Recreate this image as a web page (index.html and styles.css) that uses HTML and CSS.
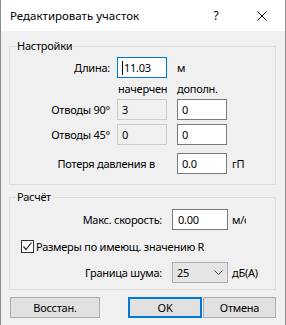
FILE: index.html
```html
<!DOCTYPE html>
<html lang="ru">
<head>
<meta charset="utf-8">
<link rel="stylesheet" href="styles.css">
</head>
<body>
<div class="window">
  <header class="titlebar">
    <span class="title">Редактировать участок</span>
    <span class="tbtn help">?</span>
    <span class="tbtn close"><svg width="10" height="10" viewBox="0 0 10 10"><path d="M0.5 0.5 L9.5 9.5 M9.5 0.5 L0.5 9.5" stroke="#000" stroke-width="1" fill="none"/></svg></span>
  </header>
  <main class="content">
    <fieldset class="group g1">
      <legend>Настройки</legend>
      <div class="grid1">
        <span class="lbl">Длина:</span>
        <div class="field focus"><span class="caret"></span>11.03</div>
        <span class="unit u-m">м</span>

        <span class="hdr c2">начерчен</span>
        <span class="hdr c3">дополн.</span>

        <span class="lbl">Отводы 90°</span>
        <div class="field ro">3</div>
        <div class="field c3">0</div>

        <span class="lbl">Отводы 45°</span>
        <div class="field ro">0</div>
        <div class="field c3">0</div>

        <span class="lbl wide">Потеря давления в</span>
        <div class="field c3">0.0</div>
        <span class="unit">гП</span>
      </div>
    </fieldset>

    <fieldset class="group g2">
      <legend>Расчёт</legend>
      <div class="grid2">
        <span class="lbl">Макс. скорость:</span>
        <div class="field">0.00</div>
        <span class="unit clip">м/с</span>

        <label class="check">
          <span class="box"><svg width="11" height="11" viewBox="0 0 11 11"><path d="M1.5 5.5 L4 8.5 L9.5 1.5" stroke="#222" stroke-width="1.2" fill="none"/></svg></span>
          <span>Размеры по имеющ. значению R</span>
        </label>

        <span class="lbl">Граница шума:</span>
        <div class="combo"><span>25</span><svg width="9" height="6" viewBox="0 0 9 6"><path d="M0.5 0.5 L4.5 4.5 L8.5 0.5" stroke="#444" stroke-width="1" fill="none"/></svg></div>
        <span class="unit">дБ(А)</span>
      </div>
    </fieldset>

    <div class="buttons">
      <button class="btn reset">Восстан.</button>
      <button class="btn ok">OK</button>
      <button class="btn">Отмена</button>
    </div>
  </main>
</div>
</body>
</html>
```

FILE: styles.css
```css
* { box-sizing: border-box; }
html, body { margin: 0; padding: 0; }
body {
  font-family: "Noto Sans", "Segoe UI", sans-serif;
  font-size: 11px;
  letter-spacing: -0.25px;
  color: #000;
  background: #f0f0f0;
}
.window {
  width: 286px;
  height: 325px;
  border-left: 1px solid #8a8a8a;
  border-right: 1px solid #8a8a8a;
  background: #f0f0f0;
  display: flex;
  flex-direction: column;
}
.titlebar {
  height: 31px;
  flex: none;
  background: #fff;
  display: flex;
  align-items: center;
  padding-left: 9px;
}
.title { flex: 1; white-space: nowrap; font-size: 11.5px; letter-spacing: 0; }
.tbtn {
  width: 46px;
  height: 31px;
  display: flex;
  align-items: center;
  justify-content: center;
}
.help { font-size: 12px; }
.content {
  padding: 7px 9px 0 8px;
  display: flex;
  flex-direction: column;
}
.group {
  margin: 0;
  padding: 0;
  border: 1px solid #dcdcdc;
  min-width: 0;
}
.group legend {
  padding: 0 1px;
  margin-left: 6px;
  line-height: 16px;
}
.g2 { margin-top: 4px; }

.lbl, .hdr, .unit {
  line-height: 21px;
  height: 21px;
  white-space: nowrap;
}
.lbl { text-align: right; }

.grid1 {
  display: grid;
  grid-template-columns: 107px 60px 50px auto;
  grid-template-rows: 21px 21px 25px 29px 21px;
  align-items: start;
  padding: 3px 0 10px;
}
.grid1 .lbl { grid-column: 1; padding-right: 7px; }
.grid1 .lbl.wide { grid-column: 1 / 3; padding-right: 22px; }
.c2 { grid-column: 2; padding-left: 1px; }
.c3 { grid-column: 3; }
.grid1 .unit { margin-left: 5px; }
.grid1 .unit.u-m { grid-column: 3; margin-left: 0; }

.field {
  width: 50px;
  height: 21px;
  line-height: 19px;
  background: #fff;
  border: 1px solid #7a7a7a;
  padding-left: 4px;
  white-space: nowrap;
  overflow: hidden;
}
.field.focus { border-color: #0078d7; padding-left: 4px; }
.field.ro { background: #f0f0f0; border-color: #cccccc; }
.caret {
  display: inline-block;
  width: 1px;
  height: 14px;
  background: #000;
  vertical-align: -3px;
  margin-right: 1px;
}

.grid2 {
  display: grid;
  grid-template-columns: 162px 56px auto;
  grid-template-rows: 21px 32px 21px;
  align-items: start;
  padding: 4px 0 6px;
}
.grid2 .lbl { grid-column: 1; padding-right: 10px; }
.grid2 .field { width: 56px; padding-left: 5px; }
.grid2 .unit { margin-left: 4px; }
.unit.clip { width: 14px; overflow: hidden; }

.check {
  grid-column: 1 / -1;
  display: flex;
  align-items: center;
  gap: 2px;
  padding-left: 11px;
  margin-top: 8px;
  height: 16px;
  white-space: nowrap;
}
.box {
  width: 13px;
  height: 13px;
  border: 1px solid #333;
  background: #fff;
  display: flex;
  align-items: center;
  justify-content: center;
  flex: none;
}

.combo {
  width: 56px;
  height: 21px;
  background: #e5e5e5;
  border: 1px solid #adadad;
  display: flex;
  align-items: center;
  justify-content: space-between;
  padding: 0 4px 0 4px;
}

.buttons {
  display: flex;
  gap: 1px;
  margin-top: 7px;
  padding-left: 1px;
}
.btn {
  font: inherit;
  letter-spacing: inherit;
  color: #000;
  height: 21px;
  width: 73px;
  padding: 0;
  background: #e1e1e1;
  border: 1px solid #adadad;
  border-radius: 0;
}
.btn.reset { width: 90px; margin-right: auto; }
.btn.ok { width: 74px; border: 2px solid #0078d7; }
```
